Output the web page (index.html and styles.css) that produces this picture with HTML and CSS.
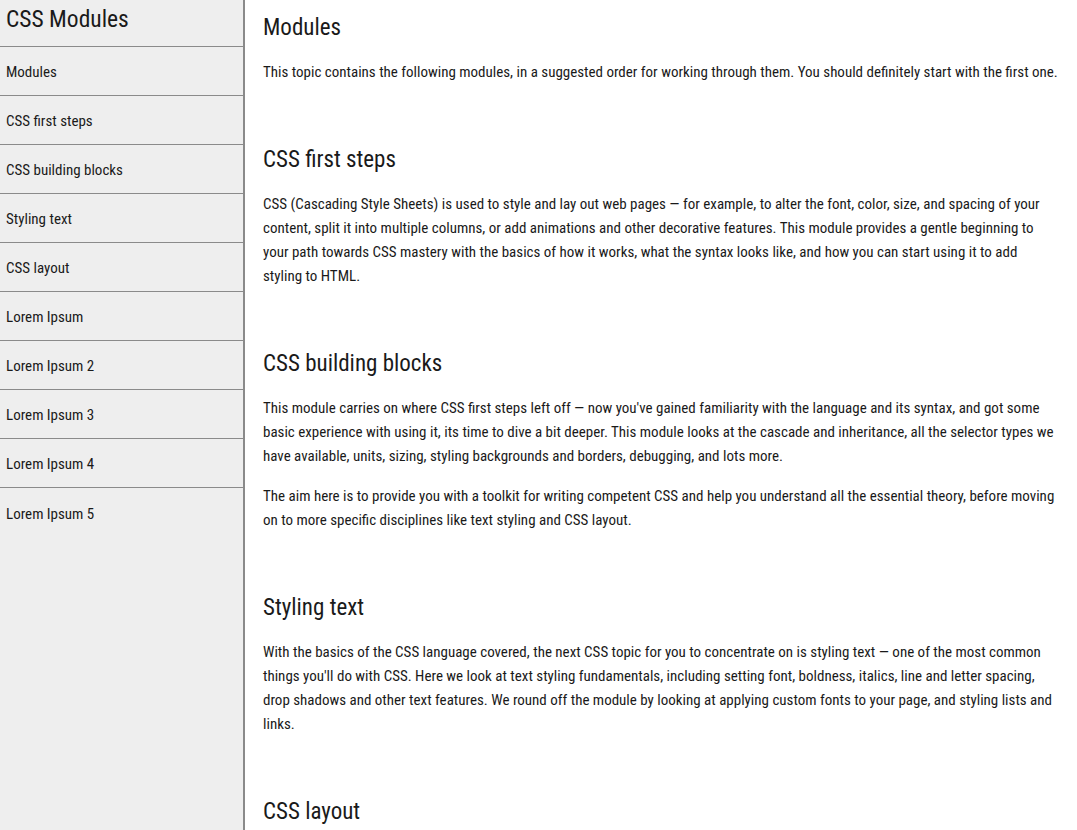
FILE: index.html
```html
<!DOCTYPE html>
<html lang="en">
<head>
<meta charset="utf-8">
<title>CSS Modules</title>
<link rel="stylesheet" href="styles.css">
</head>
<body>
<div class="page">
  <nav class="sidebar">
    <div class="brand">CSS Modules</div>
    <ul class="nav">
      <li>Modules</li>
      <li>CSS first steps</li>
      <li>CSS building blocks</li>
      <li>Styling text</li>
      <li>CSS layout</li>
      <li>Lorem Ipsum</li>
      <li>Lorem Ipsum 2</li>
      <li>Lorem Ipsum 3</li>
      <li>Lorem Ipsum 4</li>
      <li>Lorem Ipsum 5</li>
    </ul>
  </nav>
  <main class="content">
    <section class="topic">
      <h2>Modules</h2>
      <p>This topic contains the following modules, in a suggested order for working through them. You should definitely start with the first one.</p>
    </section>
    <section class="topic">
      <h2>CSS first steps</h2>
      <p>CSS (Cascading Style Sheets) is used to style and lay out web pages — for example, to alter the font, color, size, and spacing of your content, split it into multiple columns, or add animations and other decorative features. This module provides a gentle beginning to your path towards CSS mastery with the basics of how it works, what the syntax looks like, and how you can start using it to add styling to HTML.</p>
    </section>
    <section class="topic">
      <h2>CSS building blocks</h2>
      <p>This module carries on where CSS first steps left off — now you've gained familiarity with the language and its syntax, and got some basic experience with using it, its time to dive a bit deeper. This module looks at the cascade and inheritance, all the selector types we have available, units, sizing, styling backgrounds and borders, debugging, and lots more.</p>
      <p>The aim here is to provide you with a toolkit for writing competent CSS and help you understand all the essential theory, before moving on to more specific disciplines like text styling and CSS layout.</p>
    </section>
    <section class="topic">
      <h2>Styling text</h2>
      <p>With the basics of the CSS language covered, the next CSS topic for you to concentrate on is styling text — one of the most common things you'll do with CSS. Here we look at text styling fundamentals, including setting font, boldness, italics, line and letter spacing, drop shadows and other text features. We round off the module by looking at applying custom fonts to your page, and styling lists and links.</p>
    </section>
    <section class="topic">
      <h2>CSS layout</h2>
      <p>At this point we've already looked at CSS fundamentals, how to style text, and how to style and manipulate the boxes that your content sits inside. Now it's time to look at how to place your boxes in the right place in relation to the viewport, and to each other.</p>
    </section>
  </main>
</div>
</body>
</html>
```

FILE: styles.css
```css
html, body {
  margin: 0;
  padding: 0;
  height: 100%;
  overflow: hidden;
}
body {
  font-family: Roboto, "Liberation Sans", Arial, sans-serif;
  font-stretch: 75%;
  color: #1a1a1a;
  background: #fff;
}
.page {
  display: flex;
  height: 830px;
}
.sidebar {
  width: 243px;
  flex: none;
  background: #eeeeee;
  border-right: 2px solid #8a8a8a;
}
.brand {
  height: 47px;
  box-sizing: border-box;
  padding: 5px 6px 0;
  font-size: 23.5px;
  font-stretch: 76%;
  line-height: 28px;
  border-bottom: 1px solid #8a8a8a;
}
.nav {
  list-style: none;
  margin: 0;
  padding: 0;
}
.nav li {
  height: 49px;
  box-sizing: border-box;
  display: flex;
  align-items: center;
  padding: 2px 6px 0;
  font-size: 15px;
  font-stretch: 77%;
  border-bottom: 1px solid #8a8a8a;
}
.nav li:last-child {
  border-bottom: none;
}
.content {
  flex: 1;
  padding: 14px 18px 0;
  display: flex;
  flex-direction: column;
  gap: 62px;
  overflow: hidden;
}
.topic {
  display: flex;
  flex-direction: column;
  gap: 16px;
}
.topic h2 {
  margin: 0 0 2px;
  font-size: 23px;
  font-stretch: 77%;
  font-weight: normal;
  line-height: 28px;
}
.topic p {
  margin: 0;
  font-size: 15px;
  line-height: 24px;
}
```
